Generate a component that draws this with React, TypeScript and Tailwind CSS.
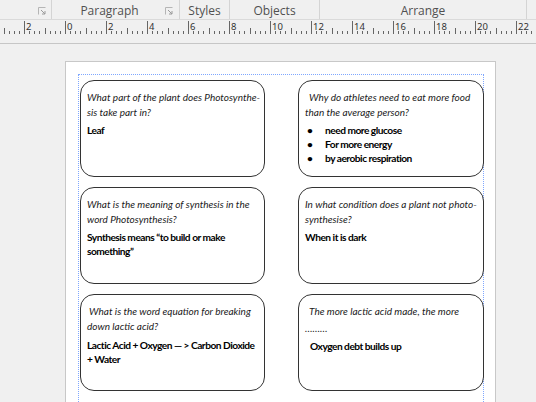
import React from 'react'

const UNIT = 20.5
const ZERO = 65.5

function Launcher() {
  return (
    <svg width="8" height="8" viewBox="0 0 8 8" className="shrink-0">
      <path d="M0.5 7.5 V0.5 H7.5" fill="none" stroke="#b5b5b5" strokeWidth="1" />
      <path d="M3 3 L7 7 M7 4 V7 H4" fill="none" stroke="#9a9a9a" strokeWidth="1" />
    </svg>
  )
}

function Ruler() {
  const ticks: React.ReactNode[] = []
  for (let i = -12; i <= 92; i++) {
    const x = ZERO + (i * UNIT) / 4
    if (x < 0 || x > 536) continue
    const q = ((i % 8) + 8) % 8
    if (q === 0) {
      const n = i / 4
      ticks.push(<line key={'t' + i} x1={x} y1={1} x2={x} y2={14} stroke="#666" strokeWidth="1" />)
      ticks.push(
        <text key={'n' + i} x={x + 1.5} y={10} fontSize="9.5" fill="#333" fontFamily="'Noto Sans', sans-serif">
          {Math.abs(n)}
        </text>
      )
    } else if (q === 4) {
      ticks.push(<line key={'t' + i} x1={x} y1={8} x2={x} y2={14} stroke="#666" strokeWidth="1" />)
    } else {
      ticks.push(<line key={'t' + i} x1={x} y1={11} x2={x} y2={14} stroke="#666" strokeWidth="1" />)
    }
  }
  return (
    <div className="h-[24px] border-b border-[#c6c6c6] bg-[#f0f0f0]">
      <svg width="536" height="23" viewBox="0 0 536 23" shapeRendering="crispEdges">
        {ticks}
      </svg>
    </div>
  )
}

function Card({ children }: { children: React.ReactNode }) {
  return (
    <div className="h-[97px] rounded-[14px] border-[1.5px] border-[#333] bg-white px-[6px] pt-[9px]">
      {children}
    </div>
  )
}

const q = 'italic text-[10px] leading-[15px] text-[#1a1a1a] whitespace-nowrap'
const a = 'font-bold text-[10.2px] leading-[14px] tracking-[-0.5px] text-black whitespace-nowrap'

export default function App() {
  return (
    <div className="w-[536px] h-[402px] overflow-hidden bg-[#f0f0f0] font-['Lato',sans-serif]">
      {/* ribbon group labels */}
      <div className="flex h-[20px] border-b border-[#dadada] text-[12px] text-[#505050] font-['Open_Sans',sans-serif]">
        <div className="w-[52px] flex items-center justify-end pr-[5px] pt-[3px] border-r border-[#d4d4d4]">
          <Launcher />
        </div>
        <div className="w-[128px] flex items-center pr-[6px] pt-[3px] border-r border-[#d4d4d4]">
          <span className="flex-1 text-center pl-[2px]">Paragraph</span>
          <Launcher />
        </div>
        <div className="w-[50px] flex items-center justify-center pt-[3px] border-r border-[#d4d4d4]">Styles</div>
        <div className="w-[90px] flex items-center justify-center pt-[3px] border-r border-[#d4d4d4]">Objects</div>
        <div className="w-[207px] flex items-center justify-center pt-[3px] border-r border-[#d4d4d4]">Arrange</div>
      </div>

      <Ruler />

      {/* workspace */}
      <div className="pl-[65px] pt-[17px]">
        <div className="w-[431px] h-[400px] bg-white border border-[#c8c8c8] pl-[12px] pt-[12px]">
          <div className="w-[406px] h-[400px] border-l border-t border-r border-dotted border-[#7fa7ff] pl-px pt-[5px]">
            <div className="grid grid-cols-[185px_186px] gap-x-[33px] gap-y-[10px]">
              <Card>
                <div className={q}>What part of the plant does Photosynthe-</div>
                <div className={q}>sis take part in?</div>
                <div className={a + ' mt-[3px]'}>Leaf</div>
              </Card>
              <Card>
                <div className={q + ' pl-[4px]'}>Why do athletes need to eat more food</div>
                <div className={q}>than the average person?</div>
                <ul className="mt-[3px]">
                  {['need more glucose', 'For more energy', 'by aerobic respiration'].map((t) => (
                    <li key={t} className={a + ' flex'}>
                      <span className="w-[20px] pl-[2px]">•</span>
                      <span>{t}</span>
                    </li>
                  ))}
                </ul>
              </Card>
              <Card>
                <div className={q}>What is the meaning of synthesis in the</div>
                <div className={q}>word Photosynthesis?</div>
                <div className={a + ' mt-[3px]'}>Synthesis means “to build or make</div>
                <div className={a}>something”</div>
              </Card>
              <Card>
                <div className={q}>In what condition does a plant not photo-</div>
                <div className={q}>synthesise?</div>
                <div className={a + ' mt-[3px]'}>When it is dark</div>
              </Card>
              <Card>
                <div className={q + ' pl-[2px]'}>What is the word equation for breaking</div>
                <div className={q}>down lactic acid?</div>
                <div className={a + ' mt-[4px]'}>Lactic Acid + Oxygen — &gt; Carbon Dioxide</div>
                <div className={a}>+ Water</div>
              </Card>
              <Card>
                <div className={q + ' pl-[4px]'}>The more lactic acid made, the more</div>
                <div className={q + ' mt-[2px]'}>………</div>
                <div className={a + ' pl-[5px] mt-[3px]'}>Oxygen debt builds up</div>
              </Card>
            </div>
          </div>
        </div>
      </div>
    </div>
  )
}
